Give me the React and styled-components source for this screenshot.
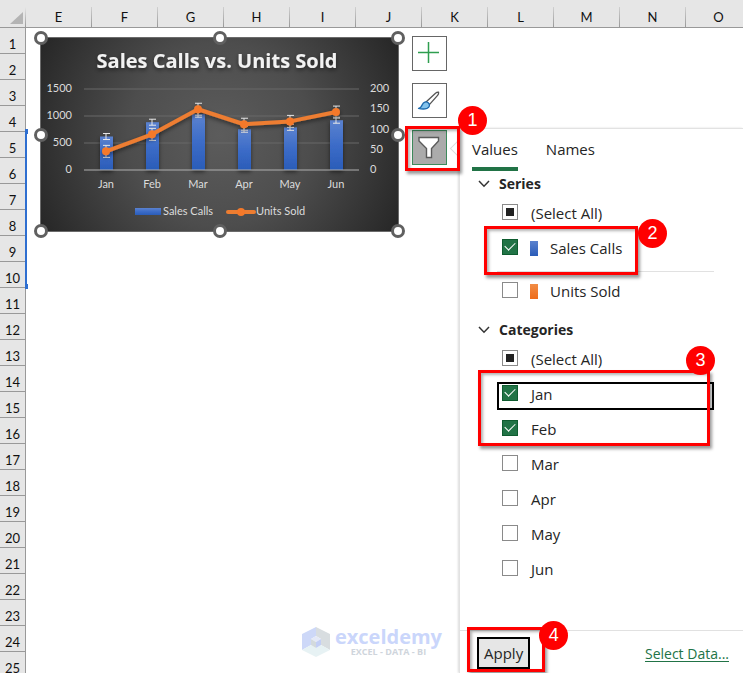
import React, { useState } from "react";
import styled, { createGlobalStyle } from "styled-components";

const GlobalStyle = createGlobalStyle`
  * {
    box-sizing: border-box;
  }
  body {
    margin: 0;
    background: #ffffff;
    color: #252525;
    font-family: "Open Sans", "Noto Sans", sans-serif;
  }
`;

const Workbook = styled.div`
  height: 100vh;
  display: flex;
  flex-direction: column;
  overflow: hidden;
`;

/* sheet headers */
const ColumnBar = styled.div`
  flex: none;
  display: flex;
  height: 28px;
  overflow: hidden;
  background: #e6e6e6;
  border-bottom: 1px solid #999999;
`;
const Corner = styled.div`
  flex: none;
  width: 26px;
  padding: 12px 3px 3px 10px;
  background: linear-gradient(#e6e6e6, #999999) right bottom / 1px 20px no-repeat;

  &::after {
    content: "";
    display: block;
    height: 12px;
    background: #b4b4b4;
    clip-path: polygon(100% 0, 100% 100%, 0 100%);
  }
`;
const ColumnHead = styled.div`
  flex: none;
  width: 66px;
  padding: 8px 1px 0 0;
  background: linear-gradient(#d0d0d0, #999999) right bottom / 1px 20px no-repeat;
  color: #111111;
  font-family: Lato, sans-serif;
  font-size: 13px;
  line-height: 19px;
  text-align: center;
`;
const Sheet = styled.div`
  flex: 1;
  min-height: 0;
  display: flex;
`;
const RowBar = styled.div`
  flex: none;
  width: 26px;
  overflow: hidden;
  background: #e6e6e6;
  border-right: 1px solid #999999;
`;
const RowHead = styled.div`
  height: 26px;
  padding-top: 6px;
  border-bottom: 1px solid #999999;
  color: #111111;
  font-family: Lato, sans-serif;
  font-size: 13px;
  line-height: 20px;
  text-align: center;
`;
const Cells = styled.div`
  position: relative;
  flex: 1;
  min-width: 0;
  display: flex;
`;
const RangeMark = styled.div`
  position: absolute;
  top: 103px;
  left: -1px;
  width: 2px;
  height: 155px;
  background: #2f6fd0;

  &::before,
  &::after {
    content: "";
    position: absolute;
    left: 0;
    width: 3px;
    height: 5px;
    background: #2f6fd0;
  }
  &::before {
    top: -2px;
  }
  &::after {
    bottom: -3px;
  }
`;

/* chart object */
const ChartColumn = styled.div`
  flex: none;
  padding: 9px 0 15px 14px;
  display: flex;
  flex-direction: column;
  justify-content: space-between;
`;
const ChartFrame = styled.div`
  position: relative;
  width: 359px;
  border: 1px solid #6b6b6b;
  background: radial-gradient(circle at 50% 50%, #5c5c5c 0%, #4d4d4d 45%, #262626 100%);

  svg {
    display: block;
  }
`;
const Handle = styled.span`
  position: absolute;
  left: ${(props) => props.$x};
  top: ${(props) => props.$y};
  width: 14px;
  height: 14px;
  margin: -7px;
  border: 3px solid #606060;
  border-radius: 50%;
  background: #ffffff;
`;

const Brand = styled.div`
  align-self: flex-end;
  display: flex;
  align-items: center;
  gap: 5px;
  margin-right: -43px;
`;
const BrandText = styled.div`
  display: flex;
  flex-direction: column;
  align-items: center;
`;
const BrandName = styled.span`
  color: #cad6fb;
  font-size: 20px;
  font-weight: 700;
  line-height: 20px;
`;
const BrandTag = styled.span`
  color: #cfd5dc;
  font-size: 9px;
  font-weight: 700;
  line-height: 10px;
`;

/* buttons beside the chart */
const Tools = styled.div`
  flex: none;
  padding: 8px 0 0 13px;
  display: flex;
  flex-direction: column;
  gap: 12px;
`;
const ToolSlot = styled.div`
  position: relative;
`;
const ToolButton = styled.button`
  display: flex;
  align-items: center;
  justify-content: center;
  width: 35px;
  height: 35px;
  padding: 0;
  border: 1px solid ${(props) => (props.$active ? "#3d8a5c" : "#666666")};
  background: ${(props) => (props.$active ? "#ababab" : "#ffffff")};
`;

/* numbered callouts */
const Callout = styled.div`
  position: absolute;
  z-index: 2;
  inset: ${(props) => props.$inset};
  border: 3px solid #ff0000;
  box-shadow: 2px 3px 3px rgba(0, 0, 0, 0.4), inset 2px 2px 3px rgba(0, 0, 0, 0.3);
  pointer-events: none;
`;
const Step = styled.span`
  position: absolute;
  top: ${(props) => props.$top}px;
  right: ${(props) => props.$right}px;
  width: 29px;
  height: 29px;
  border-radius: 50%;
  background: #ff0000;
  color: #ffffff;
  font-family: "Liberation Sans", Arial, sans-serif;
  font-size: 18px;
  line-height: 29px;
  text-align: center;
`;

/* filter pane */
const Pane = styled.aside`
  position: relative;
  flex: 1;
  min-width: 0;
  margin: 100px 0 0 12px;
  display: flex;
  flex-direction: column;
  border-top: 1px solid #e2e2e2;
  border-left: 1px solid #e2e2e2;
  background: #ffffff;
  box-shadow: -1px 0 2px rgba(0, 0, 0, 0.14);
`;
const Beak = styled.span`
  position: absolute;
  top: 14px;
  left: -8px;
  width: 11px;
  height: 11px;
  border-left: 1px solid #dcdcdc;
  border-bottom: 1px solid #dcdcdc;
  background: #ffffff;
  transform: rotate(45deg);
`;
const Tabs = styled.div`
  display: flex;
  gap: 28px;
  padding-left: 12px;
`;
const Tab = styled.button`
  height: 42px;
  padding: 2px 0 0;
  border: 0;
  border-bottom: 4px solid ${(props) => (props.$active ? "#217346" : "transparent")};
  background: none;
  color: #252525;
  font-family: inherit;
  font-size: 15px;
`;
const Group = styled.fieldset`
  min-width: 0;
  margin: 0 0 10px;
  padding: 0 29px 0 18px;
  border: 0;
`;
const GroupTitle = styled.legend`
  display: flex;
  align-items: center;
  gap: 9px;
  height: 23px;
  padding: 2px 0 0;
  font-size: 14px;
  font-weight: 700;
`;
const Options = styled.div`
  position: relative;
`;
const Option = styled.label`
  position: relative;
  display: flex;
  align-items: center;
  height: 35px;
  padding-left: 24px;
  font-size: 15px;

  ${(props) =>
    props.$focused &&
    `
    &::after {
      content: "";
      position: absolute;
      inset: 7px 0 0 19px;
      border: 2px solid #000000;
    }
  `}
`;
const Check = styled.input`
  appearance: none;
  display: grid;
  place-items: center;
  flex: none;
  width: 16px;
  height: 16px;
  margin: 0 13px 0 0;
  border: 1px solid #8a8a8a;
  background: #ffffff;

  &:checked {
    border-color: #0e5c2f;
    background: #217346;
  }
  &:checked::after {
    content: "";
    width: 9px;
    height: 5px;
    margin-bottom: 3px;
    border-left: 1px solid #ffffff;
    border-bottom: 1px solid #ffffff;
    transform: rotate(-45deg);
  }
  &[aria-checked="mixed"]::after {
    content: "";
    width: 8px;
    height: 8px;
    background: #222222;
  }
`;
const Swatch = styled.span`
  width: 8px;
  height: 15px;
  margin: 4px 12px 0 -1px;
  background: ${(props) => props.$fill};
`;
const OptionText = styled.span`
  padding-top: 2px;
`;
const Divider = styled.hr`
  height: 1px;
  margin: 7px 0 0 19px;
  border: 0;
  background: #e1e1e1;
`;
const PaneFooter = styled.div`
  margin-top: auto;
  display: flex;
  align-items: center;
  justify-content: space-between;
  height: 43px;
  padding: 2px 14px 0 17px;
  border-top: 1px solid #e1e1e1;
`;
const ApplySlot = styled.div`
  position: relative;
`;
const ApplyButton = styled.button`
  height: 32px;
  padding: 0 5px;
  border: 2px solid #000000;
  background: #e6e6e6;
  color: #252525;
  font-family: inherit;
  font-size: 15px;
`;
const DataLink = styled.a`
  color: #217346;
  font-size: 14px;
  text-underline-offset: 2px;
`;

const columns = ["E", "F", "G", "H", "I", "J", "K", "L", "M", "N", "O"];
const rows = Array.from({ length: 25 }, (_, i) => i + 1);
const months = ["Jan", "Feb", "Mar", "Apr", "May", "Jun"];
const calls = [620, 885, 1034, 755, 790, 922];
const sold = [46, 88, 150, 113, 120, 143];

const handles = [
  ["0%", "0%"],
  ["50%", "0%"],
  ["100%", "0%"],
  ["0%", "50%"],
  ["100%", "50%"],
  ["0%", "100%"],
  ["50%", "100%"],
  ["100%", "100%"],
];

const baseY = 132;
const plotHeight = 81;
const monthX = (i) => 65 + i * 46;
const callsY = (v) => baseY - (v / 1500) * plotHeight;
const soldY = (v) => baseY - (v / 200) * plotHeight;

const ErrorBar = ({ x, y, size }) => (
  <path
    d={`M${x - 3} ${y - size}h7M${x} ${y - size}v${size * 2}M${x - 3} ${y + size}h7`}
    stroke="#e8e8e8"
    strokeWidth="1"
    fill="none"
  />
);

const SalesChart = () => (
  <svg width="357" height="193" viewBox="0 0 357 193" fontFamily="Lato, sans-serif" fontSize="11" fill="#dcdcdc">
    <defs>
      <linearGradient id="bar" x1="0" y1="0" x2="0" y2="1">
        <stop offset="0" stopColor="#5b82cf" />
        <stop offset="0.5" stopColor="#3c6cc8" />
        <stop offset="1" stopColor="#2a5cb8" />
      </linearGradient>
      <filter id="shade" x="-20%" y="-20%" width="140%" height="150%">
        <feDropShadow dx="0" dy="2" stdDeviation="2" floodOpacity="0.5" />
      </filter>
    </defs>
    <text
      x="176"
      y="30"
      textAnchor="middle"
      fontFamily="Open Sans, sans-serif"
      fontSize="20"
      fontWeight="700"
      fill="#f2f2f2"
      filter="url(#shade)"
    >
      Sales Calls vs. Units Sold
    </text>
    {[500, 1000, 1500].map((v) => (
      <path key={v} d={`M43 ${callsY(v)}H318`} stroke="#686868" />
    ))}
    {[0, 500, 1000, 1500].map((v) => (
      <text key={v} x="31" y={callsY(v) + 3} textAnchor="end">
        {v}
      </text>
    ))}
    {[0, 50, 100, 150, 200].map((v) => (
      <text key={v} x="329" y={soldY(v) + 3}>
        {v}
      </text>
    ))}
    <g filter="url(#shade)">
      {calls.map((v, i) => (
        <rect key={months[i]} x={monthX(i) - 6} y={callsY(v)} width="13" height={baseY - callsY(v)} fill="url(#bar)" />
      ))}
    </g>
    <path d="M43 132H318" stroke="#b0b0b0" />
    {months.map((m, i) => (
      <g key={m}>
        <ErrorBar x={monthX(i)} y={callsY(calls[i])} size={3} />
        <ErrorBar x={monthX(i)} y={soldY(sold[i])} size={6} />
        <text x={monthX(i)} y="150" textAnchor="middle">
          {m}
        </text>
      </g>
    ))}
    <g filter="url(#shade)">
      <polyline
        points={sold.map((v, i) => `${monthX(i)},${soldY(v)}`).join(" ")}
        fill="none"
        stroke="#ed7d31"
        strokeWidth="4"
        strokeLinejoin="round"
      />
      {sold.map((v, i) => (
        <circle key={months[i]} cx={monthX(i)} cy={soldY(v)} r="4" fill="#f5792a" />
      ))}
    </g>
    <rect x="94" y="170" width="26" height="7" fill="url(#bar)" />
    <text x="122" y="177">
      Sales Calls
    </text>
    <path d="M187 174H213" stroke="#ed7d31" strokeWidth="4" strokeLinecap="round" />
    <circle cx="200" cy="174" r="4" fill="#f5792a" />
    <text x="215" y="177">
      Units Sold
    </text>
  </svg>
);

const PlusIcon = () => (
  <svg width="33" height="33" viewBox="0 0 33 33" fill="none" stroke="#2f9e4f" strokeWidth="1.5">
    <path d="M15.5 5v21M5 15.5h21" />
  </svg>
);

const BrushIcon = () => (
  <svg width="33" height="33" viewBox="0 0 33 33" fill="none" strokeLinejoin="round">
    <path
      d="M13 18L22.5 9.2C24 8 25.6 8.2 25.6 8.2C25.8 10 24.6 11.4 24.6 11.4L16.4 20.6Z"
      fill="#ffffff"
      stroke="#555555"
      strokeWidth="1.3"
    />
    <path
      d="M5.5 24.3C8 24 8.6 22.6 9.4 20.6C10.4 18.2 13.2 17 15.2 18.7C17.4 20.6 16.6 23.4 14 24.4C11 25.4 8 25 5.5 24.3Z"
      fill="#83c3ec"
      stroke="#1b69ad"
      strokeWidth="1.3"
    />
  </svg>
);

const FunnelIcon = () => (
  <svg width="33" height="33" viewBox="0 0 33 33">
    <path d="M6 6.5H25.5V10L18.5 17.5V26.5H13.5V17.5L6 10Z" fill="#ffffff" stroke="#5a5a5a" strokeWidth="1.4" />
  </svg>
);

const Chevron = () => (
  <svg width="12" height="8" viewBox="0 0 12 8" fill="none" stroke="#333333" strokeWidth="1.5">
    <path d="M1 1L6 6.2L11 1" />
  </svg>
);

const BrandMark = () => (
  <svg width="28" height="32" viewBox="0 0 28 32">
    <path d="M14 1L0 8V24L9 19V13L14 10Z" fill="#cdd8f8" />
    <path d="M14 1L28 8V24L19 19V13L14 10Z" fill="#d8dde0" />
    <path d="M0 24L9 19L14 22L19 19L28 24L14 31Z" fill="#e7f2f4" />
    <path d="M14 10L19 13L14 16L9 13Z" fill="#e4e9f7" />
    <path d="M9 13L14 16V22L9 19Z" fill="#d3dadd" />
    <path d="M19 13V19L14 22V16Z" fill="#c3cff5" />
  </svg>
);

const CheckRow = ({ text, checked, mixed, focused, swatch, onToggle }) => (
  <Option $focused={focused}>
    <Check type="checkbox" checked={checked} aria-checked={mixed ? "mixed" : checked} onChange={onToggle} />
    {swatch && <Swatch $fill={swatch} />}
    <OptionText>{text}</OptionText>
  </Option>
);

const FilterPane = () => {
  const [picked, setPicked] = useState(["Sales Calls", "Jan", "Feb"]);
  const toggle = (name) =>
    setPicked((list) => (list.includes(name) ? list.filter((n) => n !== name) : [...list, name]));
  const row = (name) => ({ text: name, checked: picked.includes(name), onToggle: () => toggle(name) });

  return (
    <Pane>
      <Beak />
      <Tabs role="tablist">
        <Tab role="tab" aria-selected="true" $active>
          Values
        </Tab>
        <Tab role="tab" aria-selected="false">
          Names
        </Tab>
      </Tabs>
      <Group>
        <GroupTitle>
          <Chevron />
          Series
        </GroupTitle>
        <CheckRow text="(Select All)" checked={false} mixed onToggle={() => {}} />
        <Options>
          <CheckRow {...row("Sales Calls")} swatch="linear-gradient(#5b82cf, #2a5cb8)" />
          <Callout $inset="-3px 76px -11px 6px">
            <Step $top={-10} $right={-32}>
              2
            </Step>
          </Callout>
        </Options>
        <Divider />
        <CheckRow {...row("Units Sold")} swatch="linear-gradient(#f18c45, #ee6c1a)" />
      </Group>
      <Group>
        <GroupTitle>
          <Chevron />
          Categories
        </GroupTitle>
        <CheckRow text="(Select All)" checked={false} mixed onToggle={() => {}} />
        <Options>
          <CheckRow {...row("Jan")} focused />
          <CheckRow {...row("Feb")} />
          <Callout $inset="-5px 4px -1px 0">
            <Step $top={-27} $right={-8}>
              3
            </Step>
          </Callout>
        </Options>
        {months.slice(2).map((m) => (
          <CheckRow key={m} {...row(m)} />
        ))}
      </Group>
      <PaneFooter>
        <ApplySlot>
          <ApplyButton>Apply</ApplyButton>
          <Callout $inset="-10px -15px -3px -10px">
            <Step $top={-9} $right={-26}>
              4
            </Step>
          </Callout>
        </ApplySlot>
        <DataLink href="#data">Select Data...</DataLink>
      </PaneFooter>
    </Pane>
  );
};

const App = () => {
  return (
    <Workbook>
      <GlobalStyle />
      <ColumnBar>
        <Corner />
        {columns.map((c) => (
          <ColumnHead key={c}>{c}</ColumnHead>
        ))}
      </ColumnBar>
      <Sheet>
        <RowBar>
          {rows.map((r) => (
            <RowHead key={r}>{r}</RowHead>
          ))}
        </RowBar>
        <Cells>
          <RangeMark />
          <ChartColumn>
            <ChartFrame>
              <SalesChart />
              {handles.map(([x, y]) => (
                <Handle key={x + y} $x={x} $y={y} />
              ))}
            </ChartFrame>
            <Brand>
              <BrandMark />
              <BrandText>
                <BrandName>exceldemy</BrandName>
                <BrandTag>EXCEL - DATA - BI</BrandTag>
              </BrandText>
            </Brand>
          </ChartColumn>
          <Tools>
            <ToolButton aria-label="Chart Elements">
              <PlusIcon />
            </ToolButton>
            <ToolButton aria-label="Chart Styles">
              <BrushIcon />
            </ToolButton>
            <ToolSlot>
              <ToolButton aria-label="Chart Filters" $active>
                <FunnelIcon />
              </ToolButton>
              <Callout $inset="-4px -13px -6px -7px">
                <Step $top={-23} $right={-30}>
                  1
                </Step>
              </Callout>
            </ToolSlot>
          </Tools>
          <FilterPane />
        </Cells>
      </Sheet>
    </Workbook>
  );
};

export default App;
